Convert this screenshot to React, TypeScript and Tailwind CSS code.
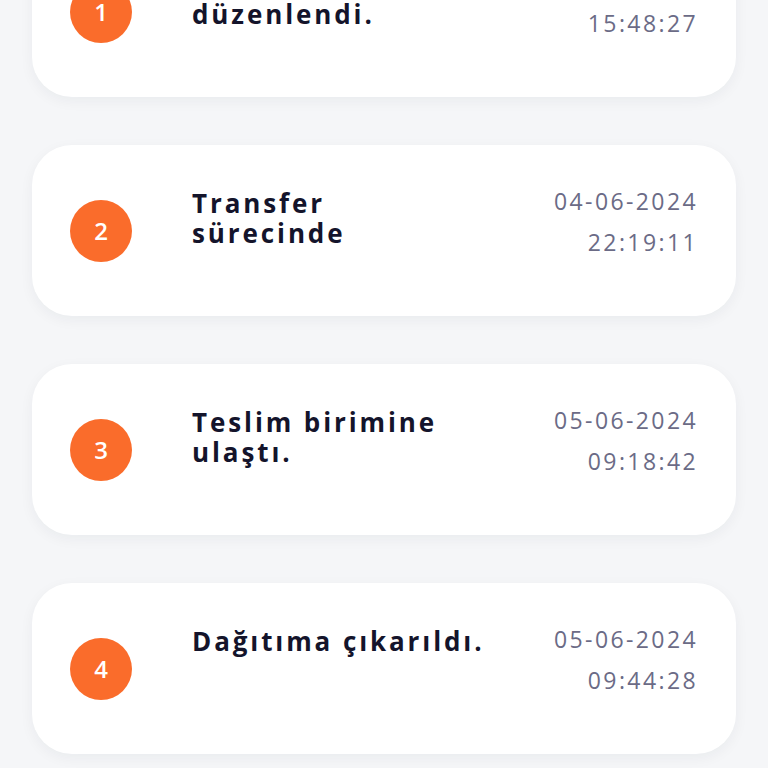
import React from 'react';

type Step = {
  no: number;
  lines: string[];
  date: string;
  time: string;
};

const steps: Step[] = [
  { no: 1, lines: ['Kayıt belgesi', 'düzenlendi.'], date: '04-06-2024', time: '15:48:27' },
  { no: 2, lines: ['Transfer', 'sürecinde'], date: '04-06-2024', time: '22:19:11' },
  { no: 3, lines: ['Teslim birimine', 'ulaştı.'], date: '05-06-2024', time: '09:18:42' },
  { no: 4, lines: ['Dağıtıma çıkarıldı.'], date: '05-06-2024', time: '09:44:28' },
];

function StepCard({ step }: { step: Step }) {
  return (
    <div className="flex h-[171px] items-center rounded-[40px] bg-white pl-[38px] pr-[38px] shadow-[0_4px_14px_rgba(20,30,60,0.05)]">
      {/* Number badge */}
      <div className="flex h-[62px] w-[62px] shrink-0 items-center justify-center rounded-full bg-[#fa6c2b] text-[24px] font-semibold text-white">
        {step.no}
      </div>

      <div className="ml-[60px] flex flex-1 justify-between self-stretch pt-[38px]">
        <div className="mt-[5px] flex flex-col text-[26px] font-bold leading-[30px] tracking-[2.9px] text-[#14142b]">
          {step.lines.map((line) => (
            <span key={line} className="whitespace-nowrap">
              {line}
            </span>
          ))}
        </div>
        <div className="mt-[3px] flex flex-col items-end text-[23px] leading-[30px] tracking-[2.4px] text-[#6b6b86]">
          <span>{step.date}</span>
          <span className="mt-[11px]">{step.time}</span>
        </div>
      </div>
    </div>
  );
}

export default function App() {
  return (
    <div
      className="min-h-screen overflow-hidden bg-[#f5f6f8] px-8"
      style={{ fontFamily: '"Open Sans", "Noto Sans", sans-serif' }}
    >
      <div className="-mt-[74px] flex flex-col gap-[48px] pb-[15px]">
        {steps.map((step) => (
          <StepCard key={step.no} step={step} />
        ))}
      </div>
    </div>
  );
}
